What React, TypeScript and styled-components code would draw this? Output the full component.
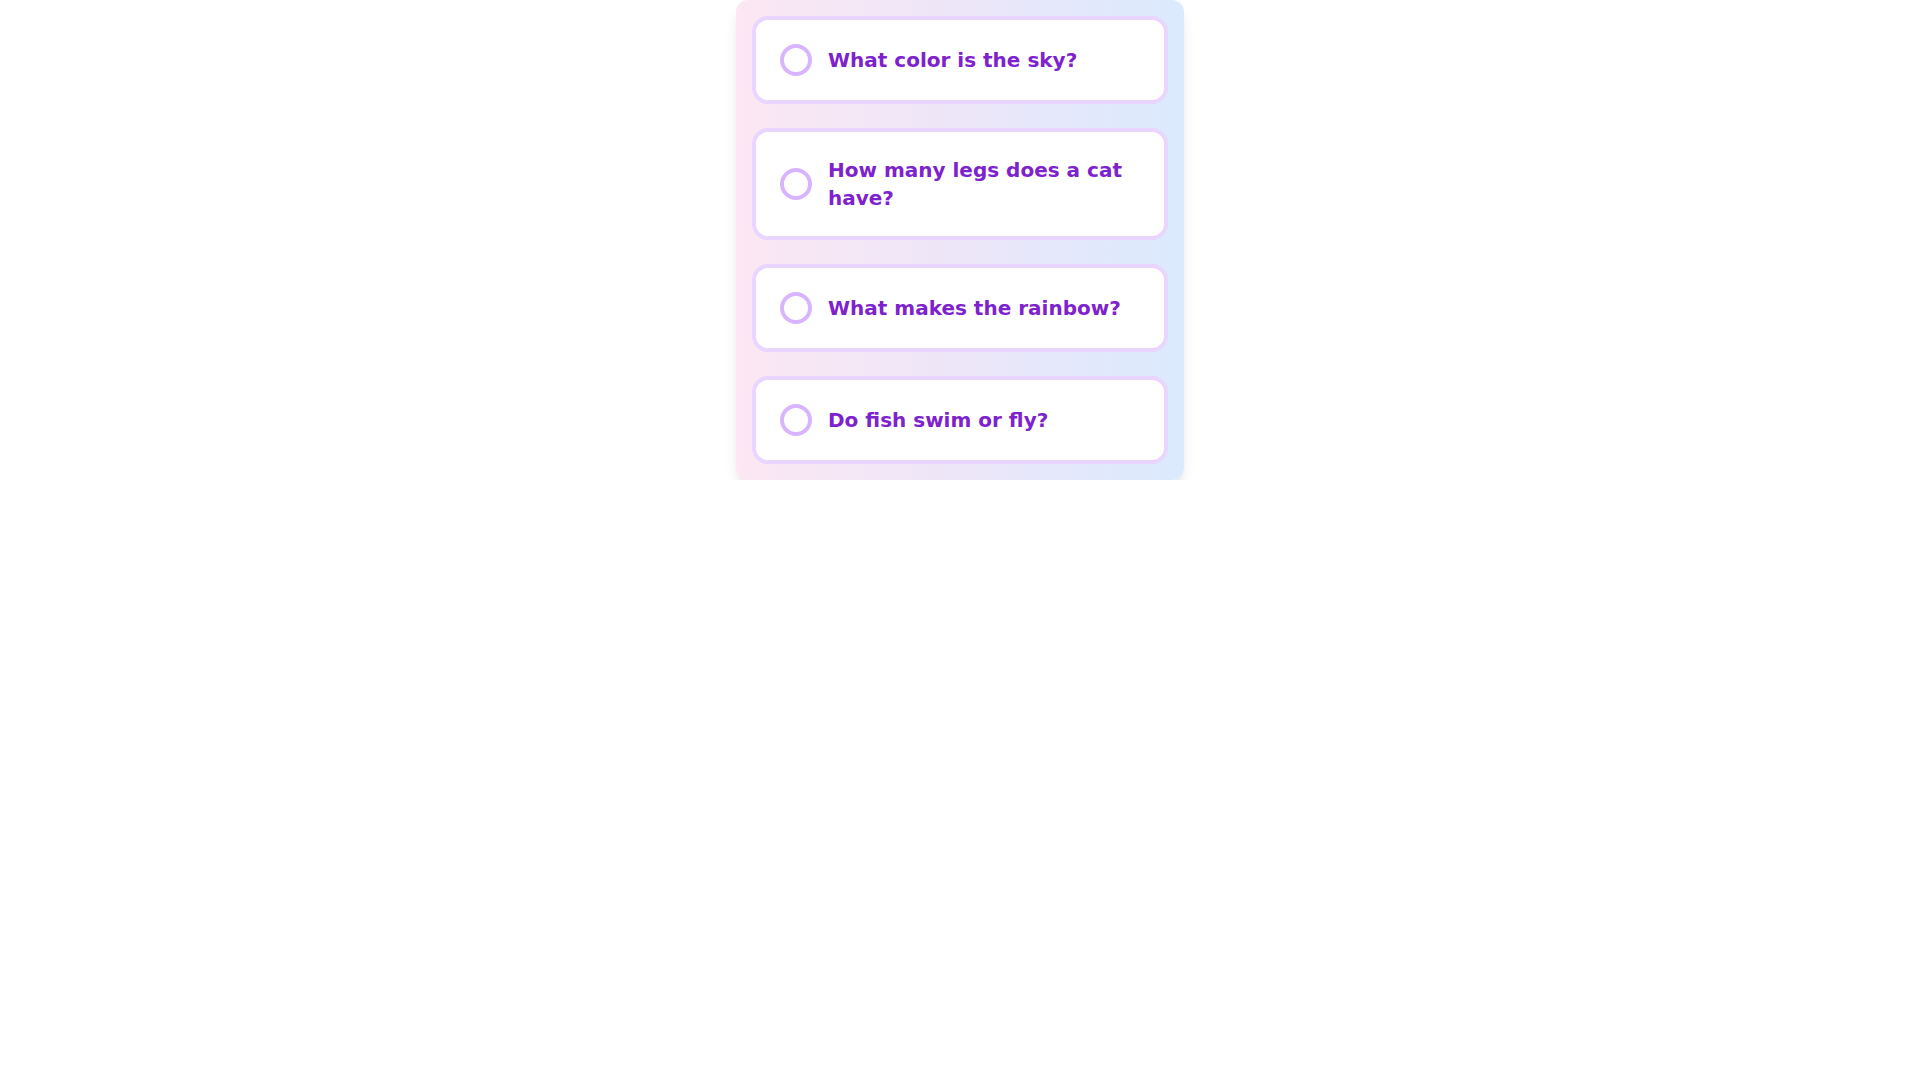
import React from "react";
import styled, { createGlobalStyle } from "styled-components";

const GlobalStyle = createGlobalStyle`
  html, body {
    margin: 0;
    padding: 0;
    background: #ffffff;
    font-family: "DejaVu Sans", "Noto Sans", sans-serif;
  }
  * { box-sizing: border-box; }
`;

const Panel = styled.div`
  width: 448px;
  margin: 0 auto;
  padding: 16px;
  border-radius: 12px;
  background: linear-gradient(to right, #fce7f3, #ece6f8 50%, #dbeafe);
  box-shadow: 0 10px 15px -3px rgba(0, 0, 0, 0.1), 0 4px 6px -4px rgba(0, 0, 0, 0.1);
  display: flex;
  flex-direction: column;
  gap: 24px;
`;

const Card = styled.div`
  display: flex;
  align-items: center;
  gap: 16px;
  padding: 24px;
  background: #ffffff;
  border: 4px solid #e9d5ff;
  border-radius: 16px;
`;

const Radio = styled.span`
  flex: none;
  width: 32px;
  height: 32px;
  border-radius: 50%;
  border: 4px solid #d8b4fe;
  background: #ffffff;
`;

const Question = styled.span`
  font-family: "DejaVu Sans", sans-serif;
  font-weight: 700;
  font-size: 20px;
  line-height: 28px;
  color: #7e22ce;
`;

const questions = [
  "What color is the sky?",
  "How many legs does a cat have?",
  "What makes the rainbow?",
  "Do fish swim or fly?",
];

export default function App() {
  return (
    <>
      <GlobalStyle />
      <Panel>
        {questions.map((q) => (
          <Card key={q}>
            <Radio />
            <Question>{q}</Question>
          </Card>
        ))}
      </Panel>
    </>
  );
}
